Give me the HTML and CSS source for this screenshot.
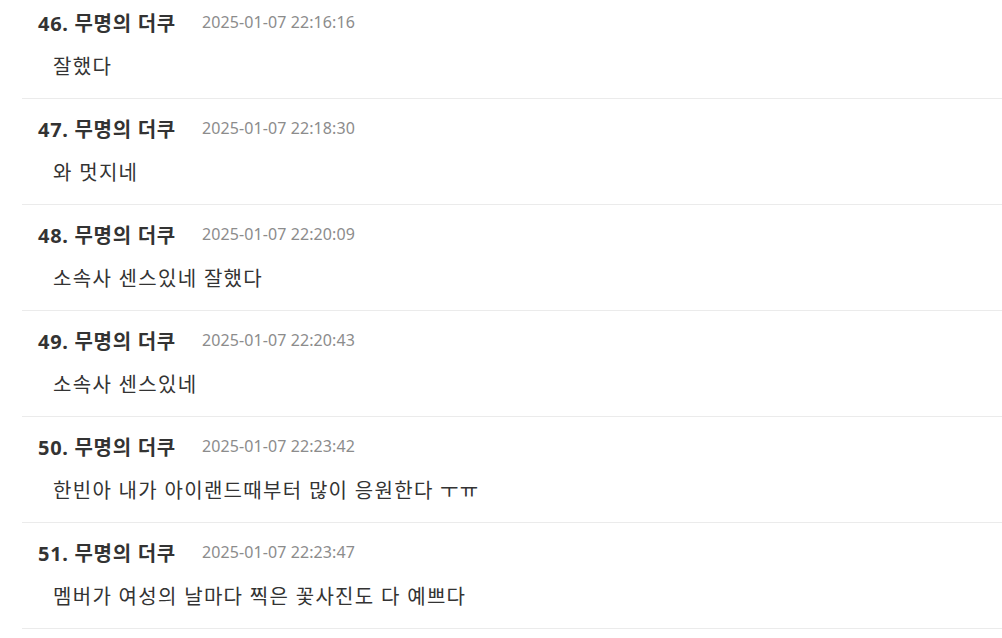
FILE: index.html
```html
<!DOCTYPE html>
<html lang="ko">
<head>
    <meta charset="UTF-8">
    <meta name="viewport" content="width=device-width, initial-scale=1.0">
    <title>댓글</title>
    <link rel="stylesheet" href="styles.css">
</head>
<body>
    <ul class="comments">
        <li class="comment">
            <div class="comment-head"><span class="name">46. 무명의 더쿠</span><span class="date">2025-01-07 22:16:16</span></div>
            <p class="comment-body">잘했다</p>
        </li>
        <li class="comment">
            <div class="comment-head"><span class="name">47. 무명의 더쿠</span><span class="date">2025-01-07 22:18:30</span></div>
            <p class="comment-body">와 멋지네</p>
        </li>
        <li class="comment">
            <div class="comment-head"><span class="name">48. 무명의 더쿠</span><span class="date">2025-01-07 22:20:09</span></div>
            <p class="comment-body">소속사 센스있네 잘했다</p>
        </li>
        <li class="comment">
            <div class="comment-head"><span class="name">49. 무명의 더쿠</span><span class="date">2025-01-07 22:20:43</span></div>
            <p class="comment-body">소속사 센스있네</p>
        </li>
        <li class="comment">
            <div class="comment-head"><span class="name">50. 무명의 더쿠</span><span class="date">2025-01-07 22:23:42</span></div>
            <p class="comment-body">한빈아 내가 아이랜드때부터 많이 응원한다 ㅜㅠ</p>
        </li>
        <li class="comment">
            <div class="comment-head"><span class="name">51. 무명의 더쿠</span><span class="date">2025-01-07 22:23:47</span></div>
            <p class="comment-body">멤버가 여성의 날마다 찍은 꽃사진도 다 예쁘다</p>
        </li>
    </ul>
</body>
</html>
```

FILE: styles.css
```css
body {
    margin: 0;
    background-color: #fff;
    font-family: "Noto Sans", "Noto Sans CJK KR", sans-serif;
    color: #333;
    overflow: hidden;
}
.comments {
    list-style: none;
    margin: -7px 0 0 22px;
    padding: 0;
}
.comment {
    padding: 19px 0 19px 16px;
    border-bottom: 1px solid #ebebeb;
}
.comment-head {
    display: flex;
    align-items: center;
    gap: 26px;
    height: 20px;
}
.name {
    font-size: 20px;
    font-weight: bold;
    letter-spacing: 0.7px;
    color: #333;
}
.date {
    font-size: 16px;
    letter-spacing: 0.1px;
    color: #8c8c8c;
}
.comment-body {
    margin: 23px 0 0 15px;
    font-size: 20px;
    line-height: 24px;
    letter-spacing: 1.3px;
    color: #333;
}
```
